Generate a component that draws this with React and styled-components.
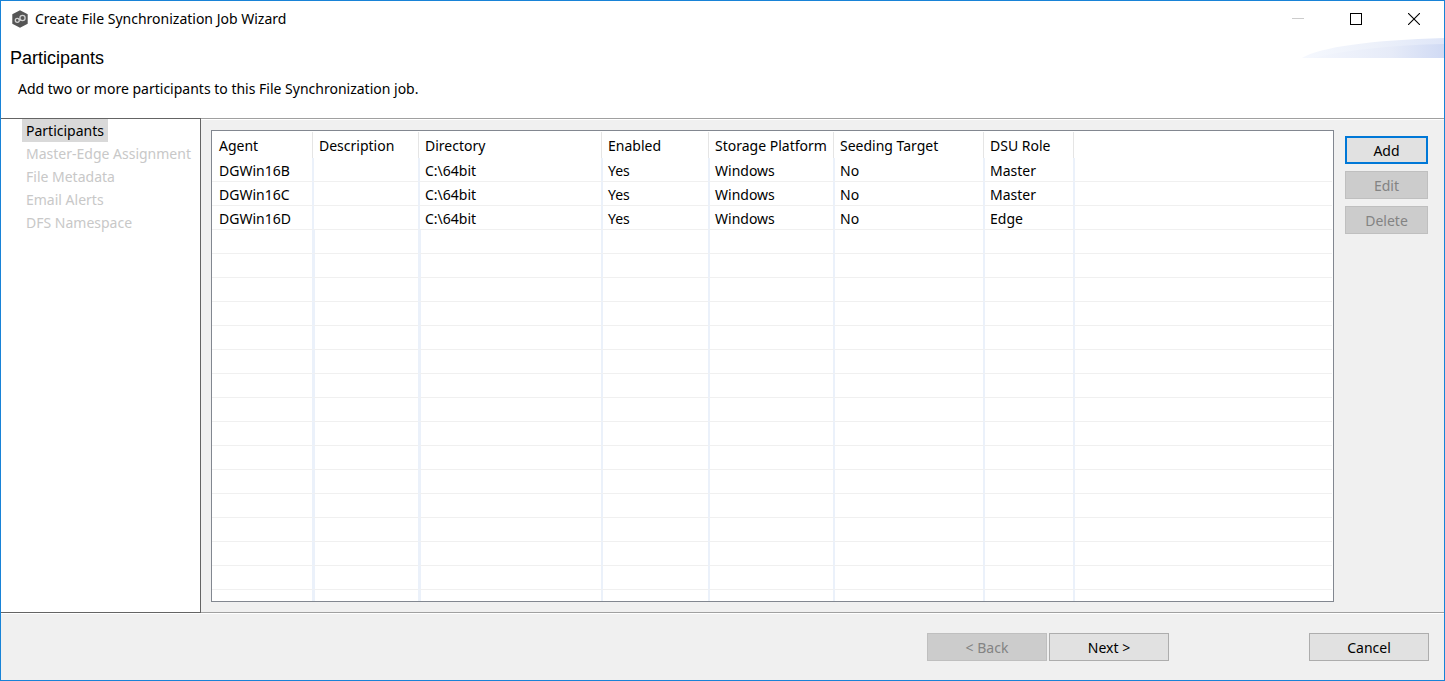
import React from 'react';
import styled, { createGlobalStyle } from 'styled-components';

const COLORS = {
  accent: '#1883d7',
  focus: '#0078d7',
  face: '#f0f0f0',
  panel: '#ffffff',
  text: '#000000',
  textDisabled: '#838383',
  stepDisabled: '#c8c8c8',
  stepActive: '#d9d9d9',
  frameDark: '#646464',
  frame: '#a0a0a0',
  tableFrame: '#828790',
  gridRow: '#f0f0f0',
  gridColumn: '#ebf1fa',
  headerLine: '#e5e5e5',
};

const STEPS = [
  'Participants',
  'Master-Edge Assignment',
  'File Metadata',
  'Email Alerts',
  'DFS Namespace',
];

const COLUMNS = [
  { key: 'agent', label: 'Agent', width: 100 },
  { key: 'description', label: 'Description', width: 106, wide: true },
  { key: 'directory', label: 'Directory', width: 183, wide: true },
  { key: 'enabled', label: 'Enabled', width: 107 },
  { key: 'platform', label: 'Storage Platform', width: 125 },
  { key: 'seeding', label: 'Seeding Target', width: 150 },
  { key: 'role', label: 'DSU Role', width: 90 },
  { key: 'filler', label: '' },
];

const PARTICIPANTS = [
  { agent: 'DGWin16B', directory: 'C:\\64bit', enabled: 'Yes', platform: 'Windows', seeding: 'No', role: 'Master' },
  { agent: 'DGWin16C', directory: 'C:\\64bit', enabled: 'Yes', platform: 'Windows', seeding: 'No', role: 'Master' },
  { agent: 'DGWin16D', directory: 'C:\\64bit', enabled: 'Yes', platform: 'Windows', seeding: 'No', role: 'Edge' },
];

const EMPTY_ROWS = Array.from({ length: 40 }, (_, i) => i);

const GlobalStyle = createGlobalStyle`
  *, *::before, *::after {
    box-sizing: border-box;
  }

  body {
    margin: 0;
    font-family: 'Noto Sans', 'Open Sans', sans-serif;
    font-size: 14px;
    line-height: 20px;
    color: ${COLORS.text};
  }

  button {
    font: inherit;
    color: inherit;
  }
`;

const Window = styled.div`
  display: flex;
  flex-direction: column;
  height: 100vh;
  min-height: 400px;
  border: 1px solid ${COLORS.accent};
  background-color: ${COLORS.face};
`;

const TitleBar = styled.div`
  display: flex;
  align-items: center;
  height: 37px;
  padding: 0 1px 1px 11px;
  background-color: ${COLORS.panel};
`;

const TitleText = styled.span`
  flex: 1;
  margin-left: 7px;
`;

const WindowButton = styled.button`
  display: flex;
  align-items: center;
  justify-content: center;
  width: 58px;
  height: 36px;
  padding: 0;
  border: none;
  background: none;
`;

const Header = styled.header`
  display: flex;
  justify-content: space-between;
  height: 80px;
  background-color: ${COLORS.panel};
`;

const HeaderText = styled.div`
  padding: 10px 0 0 9px;
`;

const PageTitle = styled.h1`
  margin: 0;
  font-family: 'Liberation Sans', Arial, sans-serif;
  font-size: 18px;
  line-height: 20px;
  font-weight: normal;
`;

const PageDescription = styled.p`
  margin: 11px 0 0 8px;
`;

const Body = styled.div`
  display: flex;
  flex: 1;
  min-height: 0;
`;

const Sidebar = styled.nav`
  width: 200px;
  flex-shrink: 0;
  border: 1px solid ${COLORS.frameDark};
  border-left: none;
  background-color: ${COLORS.panel};
`;

const StepList = styled.ul`
  margin: 0;
  padding: 0 0 0 21px;
  list-style: none;
`;

const StepItem = styled.li`
  display: flex;
`;

const StepButton = styled.button`
  height: 23px;
  padding: 0 4px;
  border: none;
  white-space: nowrap;
  background-color: ${props => (props.$active ? COLORS.stepActive : 'transparent')};
  color: ${props => (props.$active ? COLORS.text : COLORS.stepDisabled)};
`;

const Main = styled.main`
  display: flex;
  flex: 1;
  min-width: 0;
  gap: 11px;
  padding: 11px 16px 10px 10px;
  border-top: 1px solid ${COLORS.frame};
  border-bottom: 1px solid ${COLORS.frame};
  box-shadow: inset 0 1px 0 ${COLORS.panel};
`;

const TableFrame = styled.div`
  flex: 1;
  min-width: 0;
  padding: 1px 1px 0 0;
  border: 1px solid ${COLORS.tableFrame};
  background-color: ${COLORS.panel};
  overflow: hidden;
`;

const Table = styled.table`
  width: 100%;
  table-layout: fixed;
  border-collapse: separate;
  border-spacing: 0;
`;

const HeadCell = styled.th`
  height: 26px;
  padding: 2px 0 0 6px;
  border-left: 1px solid ${COLORS.headerLine};
  text-align: left;
  font-weight: normal;
  white-space: nowrap;

  &:first-child {
    padding-left: 7px;
    border-left: none;
  }
`;

const Cell = styled.td`
  height: 24px;
  padding: 3px 0 0 5px;
  border-left: ${props => (props.$wide ? 3 : 2)}px solid ${COLORS.gridColumn};
  border-bottom: 1px solid ${COLORS.gridRow};
  white-space: nowrap;

  &:first-child {
    padding-left: 7px;
    border-left: none;
  }
`;

const Actions = styled.div`
  display: flex;
  flex-direction: column;
  gap: 7px;
  width: 83px;
  padding-top: 6px;
`;

const Button = styled.button`
  width: ${props => props.$width || '100%'};
  height: 28px;
  padding: 2px 0 0;
  border: ${props => (props.$focused ? `2px solid ${COLORS.focus}` : '1px solid #adadad')};
  background-color: #e1e1e1;

  &:disabled {
    border-color: #bfbfbf;
    background-color: #cccccc;
    color: ${COLORS.textDisabled};
  }
`;

const Footer = styled.footer`
  display: flex;
  justify-content: flex-end;
  gap: 140px;
  padding: 19px 15px;
  border-top: 1px solid ${COLORS.panel};
`;

const PagerButtons = styled.div`
  display: flex;
  gap: 2px;
`;

const AppIcon = () => (
  <svg width="16" height="18" viewBox="0 0 16 18" aria-hidden="true">
    <path d="M8 0.3 L15.7 4.3 V13.7 L8 17.7 L0.3 13.7 V4.3 Z" fill="#555555" />
    <g fill="none" stroke="#d0d0d0" strokeWidth="1.3">
      <circle cx="5.3" cy="10.3" r="2" />
      <circle cx="10.5" cy="8" r="2.6" />
      <path d="M6.5 8.8 L9 10.2" />
    </g>
  </svg>
);

const HeaderSwoosh = () => (
  <svg width="142" height="20" viewBox="0 0 142 20" aria-hidden="true">
    <defs>
      <linearGradient id="swoosh" x1="0" x2="1" y1="0" y2="0">
        <stop offset="0" stopColor="#f5f8fe" />
        <stop offset="0.5" stopColor="#edf1fa" />
        <stop offset="1" stopColor="#dfe6f8" />
      </linearGradient>
      <linearGradient id="swooshInner" x1="0" x2="1" y1="0" y2="0">
        <stop offset="0" stopColor="#f3f6fd" />
        <stop offset="0.6" stopColor="#e6ebf8" />
        <stop offset="1" stopColor="#d0daf4" />
      </linearGradient>
    </defs>
    <path d="M0 20 C18 9 70 2 142 0 V20 Z" fill="url(#swoosh)" />
    <path d="M10 20 C45 12 90 7 142 6 V20 Z" fill="url(#swooshInner)" />
  </svg>
);

const WindowControls = () => (
  <>
    <WindowButton type="button" aria-label="Minimize" disabled>
      <svg width="12" height="12" viewBox="0 0 12 12">
        <path d="M0 5.5 H12" stroke="#cccccc" />
      </svg>
    </WindowButton>
    <WindowButton type="button" aria-label="Maximize">
      <svg width="12" height="12" viewBox="0 0 12 12">
        <rect x="0.5" y="0.5" width="11" height="11" fill="none" stroke="#000000" />
      </svg>
    </WindowButton>
    <WindowButton type="button" aria-label="Close">
      <svg width="12" height="12" viewBox="0 0 12 12">
        <path d="M0 0 L12 12 M12 0 L0 12" stroke="#000000" strokeWidth="1.1" />
      </svg>
    </WindowButton>
  </>
);

const ParticipantsTable = ({ participants }) => (
  <TableFrame>
    <Table aria-label="Participants">
      <colgroup>
        {COLUMNS.map((column) => (
          <col key={column.key} width={column.width} />
        ))}
      </colgroup>
      <thead>
        <tr>
          {COLUMNS.map((column) => (
            <HeadCell key={column.key} scope="col">{column.label}</HeadCell>
          ))}
        </tr>
      </thead>
      <tbody>
        {participants.map((item) => (
          <tr key={item.agent}>
            {COLUMNS.map((column) => (
              <Cell key={column.key}>{item[column.key]}</Cell>
            ))}
          </tr>
        ))}
        {EMPTY_ROWS.map((row) => (
          <tr key={row} aria-hidden="true">
            {COLUMNS.map((column) => (
              <Cell key={column.key} $wide={column.wide} />
            ))}
          </tr>
        ))}
      </tbody>
    </Table>
  </TableFrame>
);

const App = () => {
  return (
    <>
      <GlobalStyle />
      <Window>
        <TitleBar>
          <AppIcon />
          <TitleText>Create File Synchronization Job Wizard</TitleText>
          <WindowControls />
        </TitleBar>
        <Header>
          <HeaderText>
            <PageTitle>Participants</PageTitle>
            <PageDescription>
              Add two or more participants to this File Synchronization job.
            </PageDescription>
          </HeaderText>
          <HeaderSwoosh />
        </Header>
        <Body>
          <Sidebar>
            <StepList>
              {STEPS.map((step, index) => (
                <StepItem key={step}>
                  <StepButton type="button" $active={index === 0} disabled={index !== 0}>
                    {step}
                  </StepButton>
                </StepItem>
              ))}
            </StepList>
          </Sidebar>
          <Main>
            <ParticipantsTable participants={PARTICIPANTS} />
            <Actions>
              <Button type="button" $focused>Add</Button>
              <Button type="button" disabled>Edit</Button>
              <Button type="button" disabled>Delete</Button>
            </Actions>
          </Main>
        </Body>
        <Footer>
          <PagerButtons>
            <Button type="button" $width="120px" disabled>&lt; Back</Button>
            <Button type="button" $width="120px">Next &gt;</Button>
          </PagerButtons>
          <Button type="button" $width="120px">Cancel</Button>
        </Footer>
      </Window>
    </>
  );
};

export default App;
